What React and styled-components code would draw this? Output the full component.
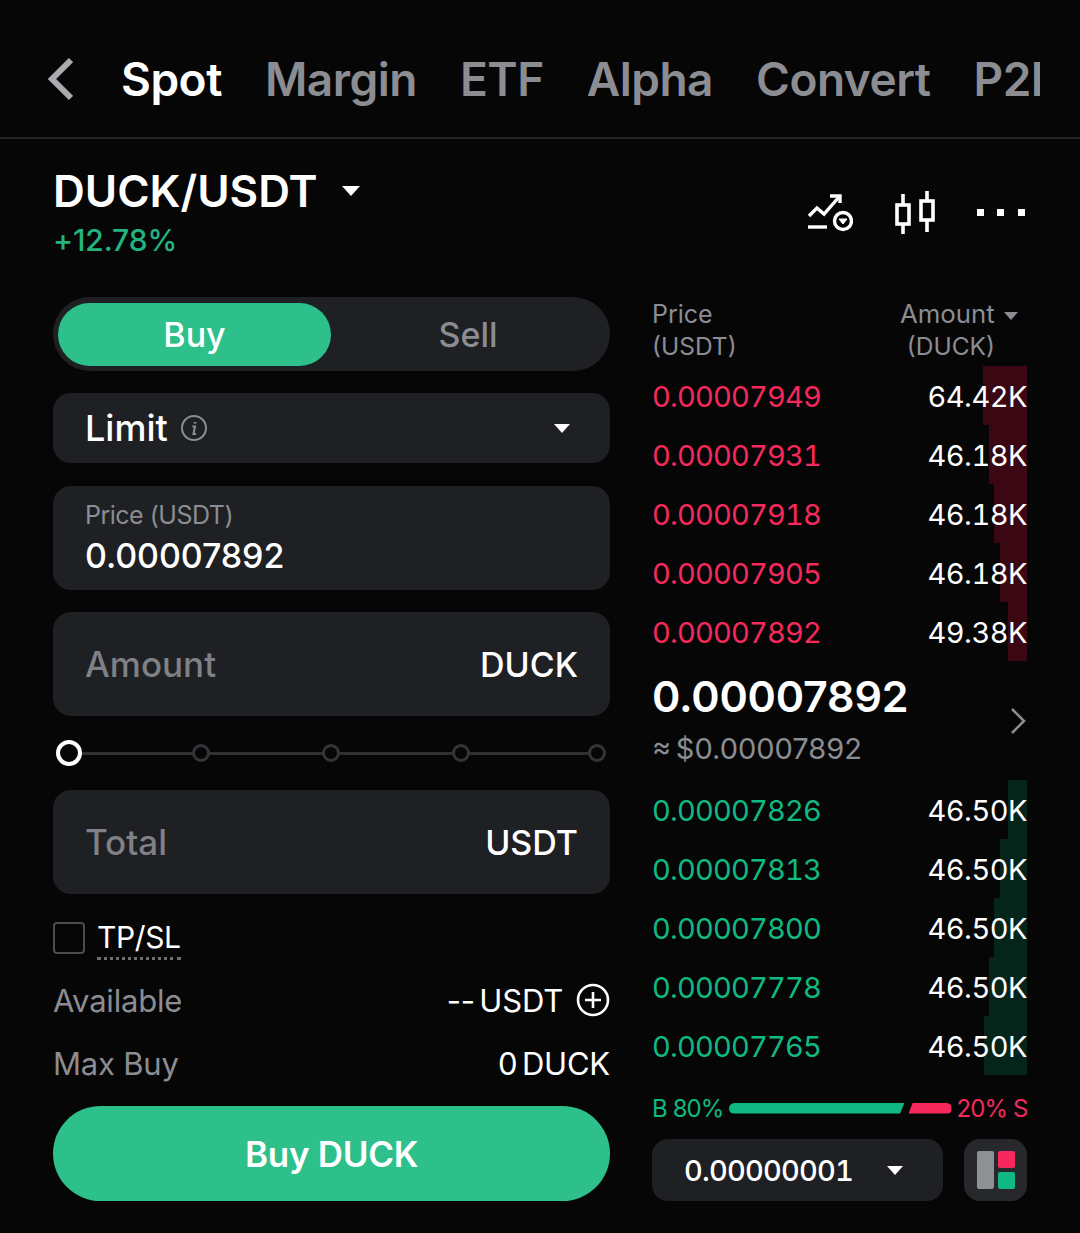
import React from "react";
import styled, { createGlobalStyle } from "styled-components";

const Global = createGlobalStyle`
  html, body { margin: 0; padding: 0; background: #060607; }
  body { font-family: Inter, "Liberation Sans", sans-serif; color: #fff; }
  * { box-sizing: border-box; }
`;

const Page = styled.div`
  width: 1080px;
  height: 1233px;
  overflow: hidden;
  background: #060607;
`;
const TabBar = styled.nav`
  height: 139px;
  padding: 20px 40px 0 47px;
  display: flex;
  align-items: center;
  border-bottom: 2px solid #222427;
`;
const BackButton = styled.span`
  display: flex;
  width: 74px;
  flex: none;
`;
const TabScroller = styled.div`
  flex: 1;
  min-width: 0;
  display: flex;
  overflow: hidden;
`;
const Tab = styled.span`
  font-size: 46px;
  line-height: 56px;
  font-weight: 600;
  letter-spacing: -0.5px;
  margin-right: 43px;
  flex: none;
  color: ${(p) => (p.$active ? "#fff" : "#8b8d92")};
`;
const PairRow = styled.header`
  height: 158px;
  padding: 24px 55px 0 53px;
  display: flex;
  justify-content: space-between;
`;
const PairInfo = styled.div`
  display: flex;
  flex-direction: column;
`;
const PairName = styled.div`
  display: flex;
  align-items: center;
  gap: 24px;
  font-size: 44px;
  line-height: 56px;
  font-weight: 600;
`;
const Change = styled.div`
  margin-top: 3px;
  font-size: 30px;
  line-height: 36px;
  font-weight: 500;
  letter-spacing: -0.1px;
  color: #23b47e;
`;
const ToolIcons = styled.div`
  display: flex;
  align-items: center;
  gap: 42px;
  height: 100px;
`;
const Main = styled.main`
  display: grid;
  grid-template-columns: 557px 375px;
  column-gap: 42px;
  padding-left: 53px;
`;
const Form = styled.section`
  display: flex;
  flex-direction: column;
`;
const Toggle = styled.div`
  height: 74px;
  border-radius: 37px;
  background: #1e2024;
  padding: 6px 5px;
  display: grid;
  grid-template-columns: 273px 1fr;
`;
const ToggleItem = styled.div`
  display: flex;
  align-items: center;
  justify-content: center;
  height: 63px;
  border-radius: 32px;
  font-size: 34px;
  font-weight: 500;
  background: ${(p) => (p.$active ? "#2dc08a" : "transparent")};
  color: ${(p) => (p.$active ? "#fff" : "#8b8d92")};
`;
const Select = styled.div`
  margin-top: 22px;
  height: 70px;
  border-radius: 18px;
  background: #1e2024;
  padding: 0 40px 0 32px;
  display: flex;
  align-items: center;
  font-size: 36px;
  font-weight: 500;
`;
const SelectLabel = styled.span`
  margin-right: 12px;
`;
const Caret = styled.span`
  width: 0;
  height: 0;
  flex: none;
  margin-left: ${(p) => p.$left || "0"};
  border-left: ${(p) => p.$size || 8}px solid transparent;
  border-right: ${(p) => p.$size || 8}px solid transparent;
  border-top: ${(p) => (p.$size || 8) * 1.2}px solid ${(p) => p.$color || "#fff"};
`;
const HeadCaret = styled(Caret)`
  display: inline-block;
  vertical-align: middle;
  margin-left: 2px;
`;
const PriceField = styled.div`
  margin-top: 23px;
  height: 104px;
  border-radius: 18px;
  background: #1e2024;
  padding: 13px 32px 0;
`;
const FieldCaption = styled.div`
  font-size: 25px;
  line-height: 32px;
  color: #8b8d92;
  letter-spacing: -0.5px;
`;
const FieldValue = styled.div`
  margin-top: 4px;
  font-size: 34px;
  line-height: 42px;
  font-weight: 500;
  letter-spacing: -0.1px;
`;
const InputField = styled.div`
  margin-top: ${(p) => p.$top || "22px"};
  height: 104px;
  border-radius: 18px;
  background: #1e2024;
  padding: 0 32px;
  display: flex;
  align-items: center;
  justify-content: space-between;
  font-size: 34px;
  font-weight: 500;
`;
const Placeholder = styled.span`
  font-size: 35px;
  color: #7f8186;
`;
const Slider = styled.div`
  margin: 24px 4px 0 3px;
  height: 26px;
  display: flex;
  align-items: center;
  background: linear-gradient(#2f3135, #2f3135) center / 100% 3px no-repeat;
`;
const Knob = styled.span`
  width: ${(p) => (p.$active ? 26 : 18)}px;
  height: ${(p) => (p.$active ? 26 : 18)}px;
  margin-left: ${(p) => p.$offset || 0}px;
  border-radius: 50%;
  background: #060607;
  border: ${(p) => (p.$active ? "4px solid #fff" : "3px solid #333539")};
`;
const TpRow = styled.div`
  margin-top: 25px;
  height: 44px;
  display: flex;
  align-items: flex-start;
  gap: 12px;
`;
const Check = styled.span`
  margin-top: 3px;
  width: 32px;
  height: 32px;
  border-radius: 4px;
  border: 2px solid #4a4c50;
`;
const TpLabel = styled.span`
  font-size: 30px;
  line-height: 36px;
  height: 41px;
  letter-spacing: -0.4px;
  border-bottom: 3px dotted #6c6e72;
`;
const InfoRow = styled.div`
  margin-top: ${(p) => p.$top};
  display: flex;
  align-items: center;
  justify-content: space-between;
  height: 36px;
  font-size: 31px;
  font-weight: 400;
  letter-spacing: -0.2px;
  color: #fff;
`;
const InfoLabel = styled.span`
  color: #8b8d92;
`;
const InfoValue = styled.span`
  display: flex;
  align-items: center;
  gap: 13px;
  word-spacing: -4px;
`;
const BuyButton = styled.button`
  margin-top: 25px;
  height: 95px;
  border: 0;
  border-radius: 48px;
  background: #2dc08a;
  color: #fff;
  font: 600 35px Inter, sans-serif;
  letter-spacing: -0.3px;
`;
const Book = styled.section`
  display: flex;
  flex-direction: column;
`;
const BookHead = styled.div`
  height: 69px;
  padding-top: 1px;
  display: flex;
  justify-content: space-between;
  font-size: 25px;
  line-height: 32px;
  color: #8b8d92;
`;
const HeadLeft = styled.div``;
const HeadRight = styled.div`
  padding-right: 9px;
  text-align: right;
`;
const HeadAmount = styled.div`
  font-size: 25.8px;
`;
const HeadUnit = styled.div`
  font-size: 24.5px;
  margin-right: ${(p) => p.$right || "0"};
`;
const Row = styled.div`
  height: 59px;
  padding-top: 2px;
  display: flex;
  align-items: center;
  justify-content: space-between;
  font-size: 29px;
  font-variant-numeric: tabular-nums;
  background: linear-gradient(to left, ${(p) => p.$depthColor} ${(p) => p.$depth}px, transparent ${(p) => p.$depth}px);
`;
const RowPrice = styled.span`
  color: ${(p) => p.$color};
  letter-spacing: -0.8px;
`;
const RowAmount = styled.span`
  letter-spacing: -0.5px;
`;
const Mid = styled.div`
  height: 119px;
  display: flex;
  align-items: center;
  justify-content: space-between;
`;
const MidInfo = styled.div`
  padding-bottom: 6px;
`;
const MidPrice = styled.div`
  font-size: 43px;
  line-height: 56px;
  font-weight: 600;
  letter-spacing: -0.2px;
`;
const MidFiat = styled.div`
  margin-top: 7px;
  font-size: 29px;
  line-height: 36px;
  word-spacing: -3.5px;
  color: #8b8d92;
`;
const Ratio = styled.div`
  margin-top: 21px;
  height: 24px;
  display: flex;
  align-items: center;
  font-size: 24px;
  letter-spacing: -0.9px;
`;
const RatioText = styled.span`
  color: ${(p) => p.$color};
  flex: none;
`;
const BuyBar = styled.span`
  width: 176px;
  height: 11px;
  margin: 0 4px 0 5px;
  flex: none;
  background: #10b981;
  border-radius: 6px 0 0 6px;
  clip-path: polygon(0 0, 100% 0, 97.5% 100%, 0 100%);
`;
const SellBar = styled.span`
  width: 43px;
  height: 11px;
  margin-right: 5px;
  flex: none;
  background: #f6285c;
  border-radius: 0 6px 6px 0;
  clip-path: polygon(10% 0, 100% 0, 100% 100%, 0 100%);
`;
const BottomRow = styled.div`
  margin-top: 19px;
  display: flex;
  justify-content: space-between;
`;
const Precision = styled.div`
  width: 291px;
  height: 62px;
  border-radius: 16px;
  background: #1e2024;
  padding: 0 40px 0 32px;
  display: flex;
  align-items: center;
  justify-content: space-between;
  font-size: 29px;
  font-weight: 500;
  letter-spacing: -0.8px;
  font-variant-numeric: tabular-nums;
`;
const LayoutButton = styled.div`
  width: 63px;
  height: 62px;
  border-radius: 16px;
  background: #26282c;
  display: flex;
  align-items: center;
  justify-content: center;
`;

const asks = [
  ["0.00007949", "64.42K", 44],
  ["0.00007931", "46.18K", 38],
  ["0.00007918", "46.18K", 33],
  ["0.00007905", "46.18K", 27],
  ["0.00007892", "49.38K", 19],
];
const bids = [
  ["0.00007826", "46.50K", 19],
  ["0.00007813", "46.50K", 27],
  ["0.00007800", "46.50K", 33],
  ["0.00007778", "46.50K", 38],
  ["0.00007765", "46.50K", 43],
];

const Back = () => (
  <svg width="26" height="44" viewBox="0 0 26 44" fill="none" stroke="#a9abae" strokeWidth="6">
    <path d="M24 3 L5 22 L24 41" />
  </svg>
);
const AlertIcon = () => (
  <svg width="46" height="38" viewBox="0 0 46 38" fill="none" stroke="#fff" strokeWidth="3.4">
    <path d="M2 22 L10 14 L17 20 L32 3" />
    <path d="M23 2 L33 2 L33 9" />
    <path d="M1 33 H20" />
    <circle cx="36" cy="27" r="8.5" />
    <path d="M32 25 H40 L36 30 Z" fill="#fff" strokeWidth="1" />
  </svg>
);
const CandleIcon = () => (
  <svg width="40" height="44" viewBox="0 0 40 44" fill="none" stroke="#fff" strokeWidth="3.6">
    <rect x="2" y="14" width="12" height="19" />
    <path d="M8 3 V14 M8 33 V43" />
    <rect x="26" y="10" width="12" height="19" />
    <path d="M32 0 V10 M32 29 V41" />
  </svg>
);
const MoreIcon = () => (
  <svg width="48" height="8" viewBox="0 0 48 8" fill="#fff">
    <rect x="0" y="0" width="7" height="7" />
    <rect x="20" y="0" width="7" height="7" />
    <rect x="41" y="0" width="7" height="7" />
  </svg>
);
const InfoIcon = () => (
  <svg width="28" height="28" viewBox="0 0 28 28" fill="none" stroke="#8b8d92" strokeWidth="2">
    <circle cx="14" cy="14" r="12" />
    <path d="M15 8 V9.6" strokeWidth="2.6" />
    <path d="M12.4 12.4 H15 L13.4 20 H16" strokeWidth="2" />
  </svg>
);
const PlusIcon = () => (
  <svg width="34" height="34" viewBox="0 0 34 34" fill="none" stroke="#fff" strokeWidth="2.6">
    <circle cx="17" cy="17" r="15" />
    <path d="M9 17 H25 M17 9 V25" />
  </svg>
);
const Chevron = () => (
  <svg width="18" height="28" viewBox="0 0 18 28" fill="none" stroke="#8b8d92" strokeWidth="2.6">
    <path d="M3 2 L15 14 L3 26" />
  </svg>
);
const LayoutIcon = () => (
  <svg width="38" height="38" viewBox="0 0 38 38">
    <rect x="0" y="0" width="17" height="38" rx="2" fill="#8e9093" />
    <rect x="21" y="0" width="17" height="17" rx="2" fill="#f6285c" />
    <rect x="21" y="21" width="17" height="17" rx="2" fill="#10b981" />
  </svg>
);

export default function App() {
  return (
    <Page>
      <Global />
      <TabBar>
        <BackButton><Back /></BackButton>
        <TabScroller>
          <Tab $active>Spot</Tab>
          <Tab>Margin</Tab>
          <Tab>ETF</Tab>
          <Tab>Alpha</Tab>
          <Tab>Convert</Tab>
          <Tab>P2P</Tab>
        </TabScroller>
      </TabBar>
      <PairRow>
        <PairInfo>
          <PairName>DUCK/USDT <Caret $size={9} /></PairName>
          <Change>+12.78%</Change>
        </PairInfo>
        <ToolIcons>
          <AlertIcon />
          <CandleIcon />
          <MoreIcon />
        </ToolIcons>
      </PairRow>
      <Main>
        <Form>
          <Toggle>
            <ToggleItem $active>Buy</ToggleItem>
            <ToggleItem>Sell</ToggleItem>
          </Toggle>
          <Select>
            <SelectLabel>Limit</SelectLabel>
            <InfoIcon />
            <Caret $size={8} $left="auto" />
          </Select>
          <PriceField>
            <FieldCaption>Price (USDT)</FieldCaption>
            <FieldValue>0.00007892</FieldValue>
          </PriceField>
          <InputField>
            <Placeholder>Amount</Placeholder>
            <span>DUCK</span>
          </InputField>
          <Slider>
            <Knob $active />
            <Knob $offset={110} />
            <Knob $offset={112} />
            <Knob $offset={112} />
            <Knob $offset={118} />
          </Slider>
          <InputField $top="24px">
            <Placeholder>Total</Placeholder>
            <span>USDT</span>
          </InputField>
          <TpRow>
            <Check />
            <TpLabel>TP/SL</TpLabel>
          </TpRow>
          <InfoRow $top="19px">
            <InfoLabel>Available</InfoLabel>
            <InfoValue>-- USDT <PlusIcon /></InfoValue>
          </InfoRow>
          <InfoRow $top="27px">
            <InfoLabel>Max Buy</InfoLabel>
            <InfoValue>0 DUCK</InfoValue>
          </InfoRow>
          <BuyButton>Buy DUCK</BuyButton>
        </Form>
        <Book>
          <BookHead>
            <HeadLeft>
              <div>Price</div>
              <HeadUnit>(USDT)</HeadUnit>
            </HeadLeft>
            <HeadRight>
              <HeadAmount>Amount <HeadCaret $size={7} $color="#8b8d92" /></HeadAmount>
              <HeadUnit $right="23px">(DUCK)</HeadUnit>
            </HeadRight>
          </BookHead>
          {asks.map(([price, amount, depth]) => (
            <Row key={price} $depth={depth} $depthColor="#3a0713">
              <RowPrice $color="#f6285c">{price}</RowPrice>
              <RowAmount>{amount}</RowAmount>
            </Row>
          ))}
          <Mid>
            <MidInfo>
              <MidPrice>0.00007892</MidPrice>
              <MidFiat>≈ $0.00007892</MidFiat>
            </MidInfo>
            <Chevron />
          </Mid>
          {bids.map(([price, amount, depth]) => (
            <Row key={price} $depth={depth} $depthColor="#05241a">
              <RowPrice $color="#10b981">{price}</RowPrice>
              <RowAmount>{amount}</RowAmount>
            </Row>
          ))}
          <Ratio>
            <RatioText $color="#10b981">B 80%</RatioText>
            <BuyBar />
            <SellBar />
            <RatioText $color="#f6285c">20% S</RatioText>
          </Ratio>
          <BottomRow>
            <Precision>
              0.00000001
              <Caret $size={8} />
            </Precision>
            <LayoutButton><LayoutIcon /></LayoutButton>
          </BottomRow>
        </Book>
      </Main>
    </Page>
  );
}
